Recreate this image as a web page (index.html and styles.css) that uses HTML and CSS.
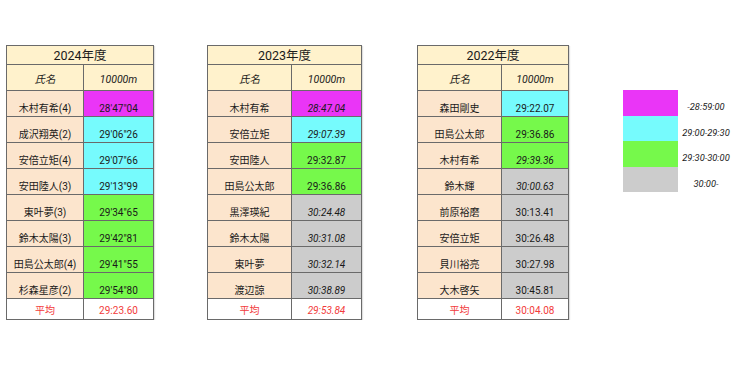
FILE: index.html
```html
<!DOCTYPE html>
<html lang="ja">
<head>
<meta charset="utf-8">
<title>10000m 記録</title>
<link rel="stylesheet" href="styles.css">
</head>
<body>
<div class="page">
  <table class="rec t1">
    <colgroup><col class="c-name1"><col></colgroup>
    <tr class="title"><td colspan="2">2024年度</td></tr>
    <tr class="head"><td>氏名</td><td>10000m</td></tr>
    <tr class="row"><td class="name">木村有希(4)</td><td class="mag">28'47"04</td></tr>
    <tr class="row"><td class="name">成沢翔英(2)</td><td class="cyan">29'06"26</td></tr>
    <tr class="row"><td class="name">安倍立矩(4)</td><td class="cyan">29'07"66</td></tr>
    <tr class="row"><td class="name">安田陸人(3)</td><td class="cyan">29'13"99</td></tr>
    <tr class="row"><td class="name">東叶夢(3)</td><td class="green">29'34"65</td></tr>
    <tr class="row"><td class="name">鈴木太陽(3)</td><td class="green">29'42"81</td></tr>
    <tr class="row"><td class="name">田島公太郎(4)</td><td class="green">29'41"55</td></tr>
    <tr class="row"><td class="name">杉森星彦(2)</td><td class="green">29'54"80</td></tr>
    <tr class="avg"><td>平均</td><td>29:23.60</td></tr>
  </table>

  <table class="rec t2">
    <colgroup><col class="c-name2"><col></colgroup>
    <tr class="title"><td colspan="2">2023年度</td></tr>
    <tr class="head"><td>氏名</td><td>10000m</td></tr>
    <tr class="row"><td class="name">木村有希</td><td class="mag it">28:47.04</td></tr>
    <tr class="row"><td class="name">安倍立矩</td><td class="cyan it">29:07.39</td></tr>
    <tr class="row"><td class="name">安田陸人</td><td class="green">29:32.87</td></tr>
    <tr class="row"><td class="name">田島公太郎</td><td class="green">29:36.86</td></tr>
    <tr class="row"><td class="name">黒澤瑛紀</td><td class="gray it">30:24.48</td></tr>
    <tr class="row"><td class="name">鈴木太陽</td><td class="gray it">30:31.08</td></tr>
    <tr class="row"><td class="name">東叶夢</td><td class="gray it">30:32.14</td></tr>
    <tr class="row"><td class="name">渡辺諒</td><td class="gray it">30:38.89</td></tr>
    <tr class="avg"><td>平均</td><td class="it">29:53.84</td></tr>
  </table>

  <table class="rec t3">
    <colgroup><col class="c-name3"><col></colgroup>
    <tr class="title"><td colspan="2">2022年度</td></tr>
    <tr class="head"><td>氏名</td><td>10000m</td></tr>
    <tr class="row"><td class="name">森田剛史</td><td class="cyan">29:22.07</td></tr>
    <tr class="row"><td class="name">田島公太郎</td><td class="green">29:36.86</td></tr>
    <tr class="row"><td class="name">木村有希</td><td class="green it">29:39.36</td></tr>
    <tr class="row"><td class="name">鈴木輝</td><td class="gray it">30:00.63</td></tr>
    <tr class="row"><td class="name">前原裕磨</td><td class="gray">30:13.41</td></tr>
    <tr class="row"><td class="name">安倍立矩</td><td class="gray">30:26.48</td></tr>
    <tr class="row"><td class="name">貝川裕亮</td><td class="gray">30:27.98</td></tr>
    <tr class="row"><td class="name">大木啓矢</td><td class="gray">30:45.81</td></tr>
    <tr class="avg"><td>平均</td><td>30:04.08</td></tr>
  </table>

  <div class="legend">
    <div class="sw mag"></div><div class="lab">-28:59:00</div>
    <div class="sw cyan"></div><div class="lab">29:00-29:30</div>
    <div class="sw green"></div><div class="lab">29:30-30:00</div>
    <div class="sw gray"></div><div class="lab">30:00-</div>
  </div>
</div>
</body>
</html>
```

FILE: styles.css
```css
html, body {
  margin: 0;
  padding: 0;
  background: #ffffff;
}

body {
  font-family: Roboto, "Liberation Sans", "Noto Sans CJK JP", sans-serif;
  color: #1a1a1a;
}

.page {
  display: flex;
  align-items: flex-start;
  padding: 45px 0 0 6px;
}

.rec {
  border-collapse: collapse;
  table-layout: fixed;
  border: 1px solid #a8a8a8;
  box-shadow: 1px 1px 1px rgba(0, 0, 0, 0.12);
  font-size: 10px;
}

.t1 { width: 148px; margin-right: 53px; }
.t2 { width: 155px; margin-right: 55px; }
.t3 { width: 152px; margin-right: 54px; }

.c-name1 { width: 77px; }
.c-name2 { width: 84px; }
.c-name3 { width: 84px; }

.rec td {
  border: 1px solid #6a6a6a;
  padding: 0 2px;
  text-align: center;
  white-space: nowrap;
  overflow: hidden;
  font-family: Roboto, "Noto Sans CJK JP", sans-serif;
}

.title td {
  height: 17px;
  background: #fff2cc;
  font-size: 12.5px;
  line-height: 14px;
  vertical-align: middle;
  padding-top: 1px;
}

.head td {
  height: 21px;
  background: #fff2cc;
  font-style: italic;
  font-size: 10.5px;
  line-height: 12px;
  vertical-align: bottom;
  padding-bottom: 4px;
}

.row td {
  height: 24px;
  line-height: 12px;
  vertical-align: bottom;
  padding-bottom: 1px;
}

.name { background: #fce5cd; }

.avg td {
  height: 18px;
  line-height: 12px;
  vertical-align: bottom;
  padding-bottom: 2px;
  color: #f23b3b;
  background: #ffffff;
}

.it { font-style: italic; }

.mag { background: #ea35f7; }
.cyan { background: #76fbfd; }
.green { background: #76f94b; }
.gray { background: #cccccc; }

.legend {
  margin-top: 45px;
  display: grid;
  grid-template-columns: 55px 56px;
  grid-auto-rows: 25.5px;
}

.lab {
  font-style: italic;
  font-size: 9.3px;
  line-height: 11px;
  text-align: center;
  padding-top: 11px;
  color: #1a1a1a;
  white-space: nowrap;
}
```
